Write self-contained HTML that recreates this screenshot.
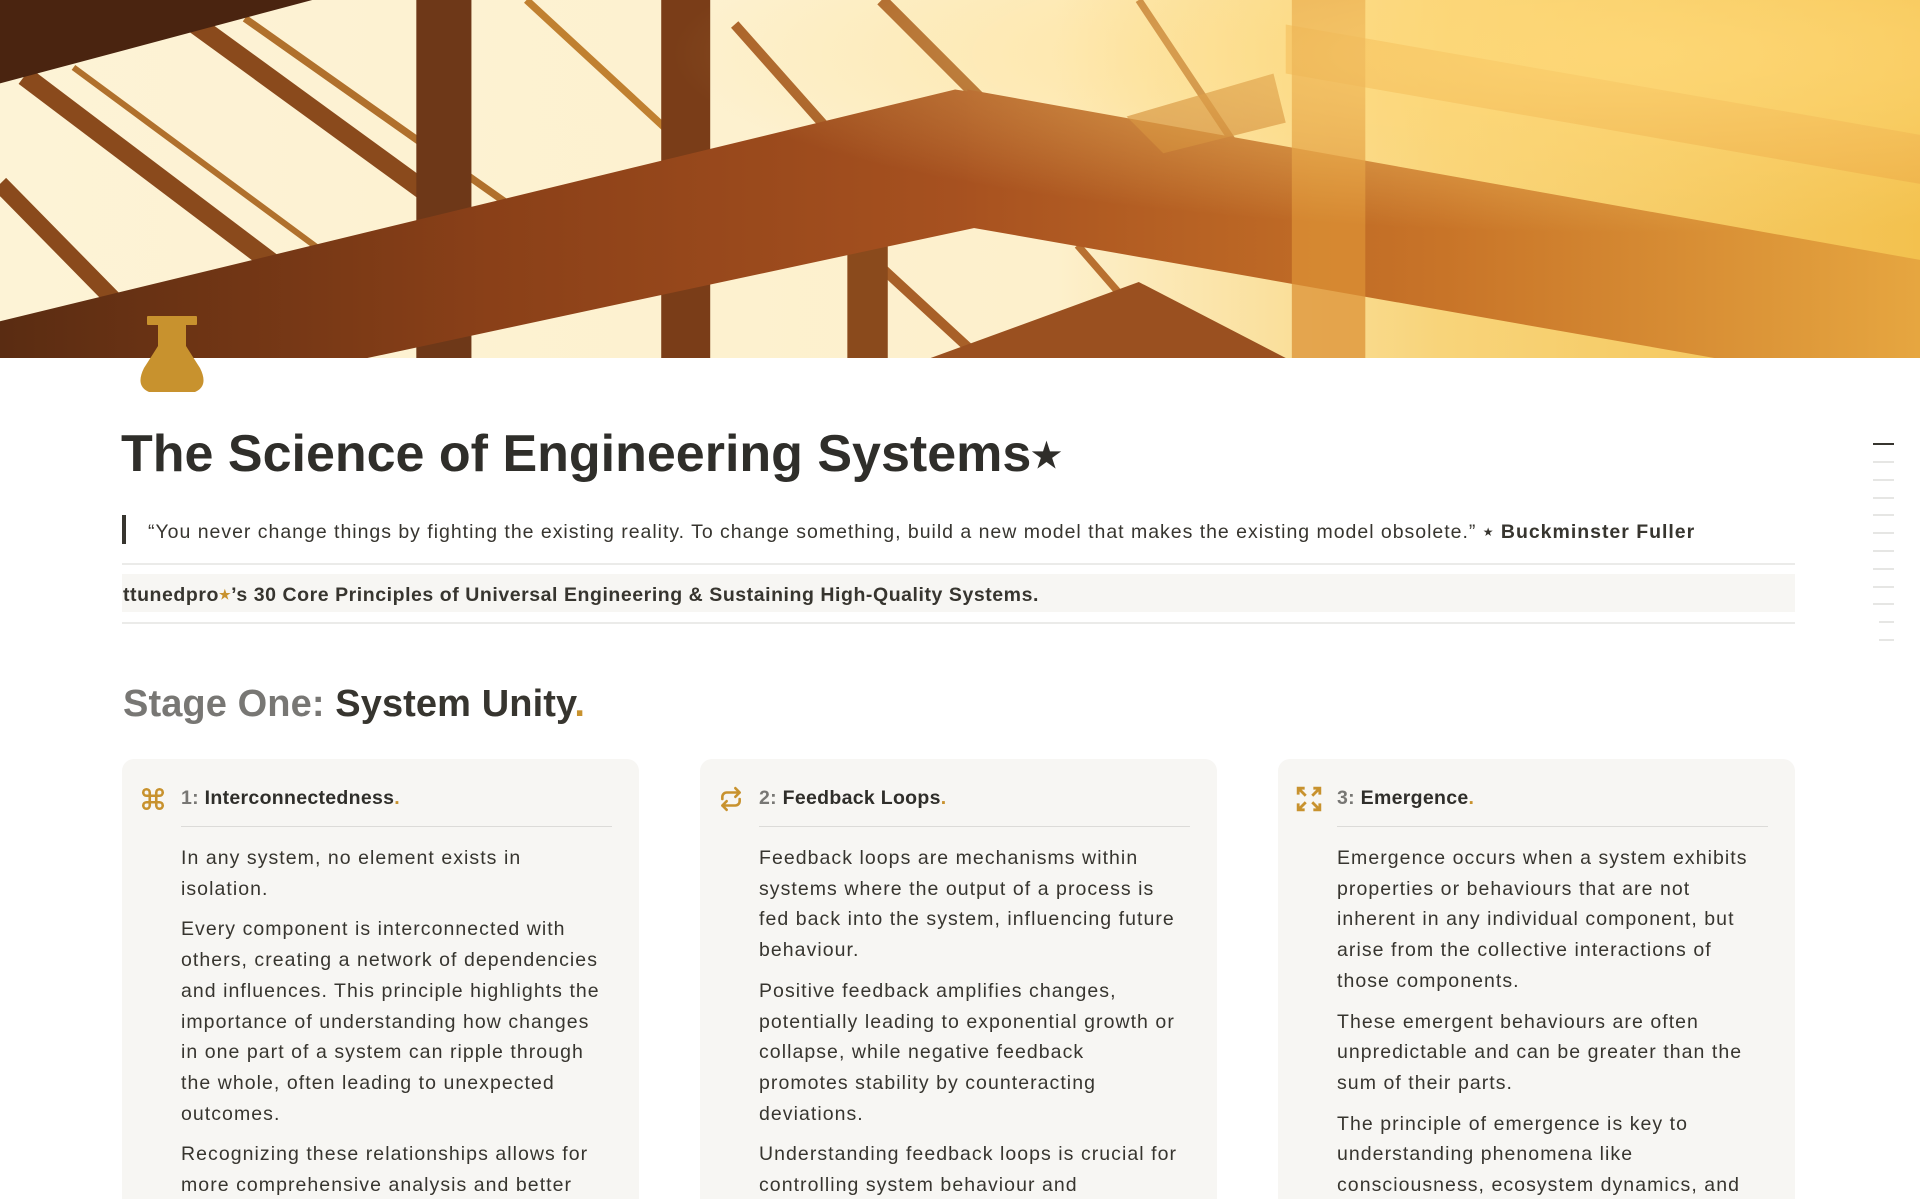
<!DOCTYPE html>
<html><head><meta charset="utf-8">
<style>
*{margin:0;padding:0;box-sizing:border-box}
html,body{width:1920px;height:1199px;overflow:hidden;background:#fff;font-family:"Liberation Sans",Arial,sans-serif;color:#37352f;position:relative}
.abs{position:absolute}
.banner{left:0;top:0;width:1920px;height:358px}
.title{left:121px;top:424px;font-size:52px;font-weight:700;color:#2f2e2a;letter-spacing:0px;white-space:nowrap}
.title .st{font-size:34px;vertical-align:4px}
.qbar{left:122px;top:515px;width:4px;height:29px;background:#37352f}
.quote{left:148px;top:521px;font-size:19.5px;white-space:nowrap;letter-spacing:0.98px}
.hr{left:122px;width:1673px;height:2px;background:#ebebe9}
.band{left:122px;top:574px;width:1673px;height:38px;background:#f7f6f3}
.bt{position:absolute;left:1px;top:10px;font-size:19.5px;font-weight:700;white-space:nowrap;letter-spacing:0.55px}
.h2{left:123px;top:683px;font-size:38px;font-weight:700;white-space:nowrap;letter-spacing:0.1px}
.card{top:759px;width:517px;height:440px;background:#f7f6f3;border-radius:12px 12px 0 0;overflow:hidden}
.ic{position:absolute;left:18px;top:27px;width:26px;height:26px}
.ct{position:absolute;left:59px;top:28px;font-size:19.5px;font-weight:700;white-space:nowrap;color:#2f2e2a;letter-spacing:0.3px}
.ct .n{color:#787774}
.gold{color:#c8922e}
.dv{position:absolute;left:59px;top:67px;width:431px;height:1px;background:#dcdbd8}
.body{position:absolute;left:59px;top:84px;font-size:19.5px;line-height:30.7px;white-space:nowrap;color:#37352f;letter-spacing:1.05px}
.body p{margin-bottom:10px}
.toc{left:1873px;height:2px;background:#e6e6e4;width:21px}
</style></head><body>

<svg class="abs banner" viewBox="0 0 1568 292" preserveAspectRatio="none">
<defs>
<linearGradient id="bg" x1="0" y1="0" x2="1" y2="0">
<stop offset="0" stop-color="#fdf3d6"/><stop offset="0.55" stop-color="#fdf0cc"/><stop offset="0.75" stop-color="#f8d47a"/><stop offset="1" stop-color="#f3c14e"/></linearGradient>
<linearGradient id="bm" x1="0" y1="0" x2="1" y2="0">
<stop offset="0" stop-color="#5a2c12"/><stop offset="0.5" stop-color="#8a4018"/><stop offset="1" stop-color="#a85220"/></linearGradient>
<linearGradient id="bm2" x1="0" y1="0" x2="1" y2="0">
<stop offset="0" stop-color="#a85220"/><stop offset="0.5" stop-color="#c87428"/><stop offset="1" stop-color="#e6a640"/></linearGradient>
<radialGradient id="glow" cx="0.85" cy="0.15" r="0.5"><stop offset="0" stop-color="#ffd978" stop-opacity="0.8"/><stop offset="1" stop-color="#ffd978" stop-opacity="0"/></radialGradient>
</defs>
<rect width="1568" height="292" fill="url(#bg)"/>
<g stroke="#8a4a1c" fill="none">
<line x1="160" y1="20" x2="380" y2="180" stroke-width="16"/>
<line x1="200" y1="15" x2="420" y2="170" stroke-width="6" stroke="#b0702c"/>
<line x1="20" y1="62" x2="240" y2="228" stroke-width="16"/>
<line x1="60" y1="55" x2="270" y2="210" stroke-width="5" stroke="#b0702c"/>
<line x1="0" y1="150" x2="120" y2="272" stroke-width="14"/>
<line x1="430" y1="0" x2="560" y2="120" stroke-width="6" stroke="#c08030"/>
<line x1="600" y1="20" x2="680" y2="110" stroke-width="8" stroke="#a86028"/>
<line x1="720" y1="0" x2="800" y2="80" stroke-width="10" stroke="#a86028"/>
<line x1="700" y1="200" x2="800" y2="292" stroke-width="8" stroke="#a86028"/>
<line x1="880" y1="200" x2="960" y2="292" stroke-width="6" stroke="#b87030"/>
<line x1="930" y1="0" x2="1010" y2="120" stroke-width="6" stroke="#b87030"/>
</g>
<polygon points="0,0 255,0 0,68" fill="#4a2410"/>
<rect x="340" y="0" width="45" height="292" fill="#6e3818"/>
<rect x="540" y="0" width="40" height="292" fill="#7a3d18"/>
<rect x="692" y="195" width="33" height="97" fill="#8a4a1c"/>
<polygon points="0,262 780,73 800,76 800,185 300,292 0,292" fill="url(#bm)"/>
<polygon points="790,73 1568,212 1568,292 1400,292 790,185" fill="url(#bm2)"/>
<polygon points="1050,20 1568,110 1568,150 1050,60" fill="#e9a440" opacity="0.6"/>
<polygon points="920,95 1040,60 1050,100 950,125" fill="#c87a2c" opacity="0.7"/>
<rect x="1055" y="0" width="60" height="292" fill="#dc9236" opacity="0.75"/>
<polygon points="760,292 930,230 1050,292" fill="#9a5020"/>
<rect width="1568" height="292" fill="url(#glow)"/>
</svg>

<svg class="abs" style="left:137px;top:316px" width="70" height="76" viewBox="0 0 70 76">
<rect x="10" y="0" width="50" height="9" rx="1" fill="#c8922e"/>
<path d="M21 9 H49 V30 Q54 38 63 52 Q72 70 58 76 H12 Q-2 70 7 52 Q16 38 21 30 Z" fill="#c8922e"/>
</svg>

<div class="abs title">The Science of Engineering Systems<span class="st">★</span></div>
<div class="abs qbar"></div>
<div class="abs quote">“You never change things by fighting the existing reality. To change something, build a new model that makes the existing model obsolete.” <span style="font-size:12px;vertical-align:2px">★</span> <b>Buckminster Fuller</b></div>
<div class="abs hr" style="top:563px"></div>
<div class="abs band"><div class="bt">ttunedpro<span class="gold" style="font-size:13px;vertical-align:2px">★</span>’s 30 Core Principles of Universal Engineering &amp; Sustaining High-Quality Systems.</div></div>
<div class="abs hr" style="top:622px"></div>
<div class="abs h2"><span style="color:#787774">Stage One:</span> System Unity<span class="gold">.</span></div>

<div class="abs card" style="left:122px">
<svg class="ic" viewBox="0 0 24 24" fill="none" stroke="#c8922e" stroke-width="2.4"><path d="M9 9H15V15H9Z M9 9V6A3 3 0 1 0 6 9H9 M15 9V6A3 3 0 1 1 18 9H15 M9 15V18A3 3 0 1 1 6 15H9 M15 15V18A3 3 0 1 0 18 15H15"/></svg>
<div class="ct"><span class="n">1:</span> Interconnectedness<span class="gold">.</span></div>
<div class="dv"></div>
<div class="body">
<p>In any system, no element exists in<br>isolation.</p>
<p>Every component is interconnected with<br>others, creating a network of dependencies<br>and influences. This principle highlights the<br>importance of understanding how changes<br>in one part of a system can ripple through<br>the whole, often leading to unexpected<br>outcomes.</p>
<p>Recognizing these relationships allows for<br>more comprehensive analysis and better</p>
</div>
</div>

<div class="abs card" style="left:700px">
<svg class="ic" viewBox="0 0 24 24" fill="none" stroke="#c8922e" stroke-width="2.4" stroke-linecap="round" stroke-linejoin="round"><path d="M16 2L20 6L16 10 M4 12V10A4 4 0 0 1 8 6H20 M8 22L4 18L8 14 M20 12V14A4 4 0 0 1 16 18H4"/></svg>
<div class="ct"><span class="n">2:</span> Feedback Loops<span class="gold">.</span></div>
<div class="dv"></div>
<div class="body">
<p>Feedback loops are mechanisms within<br>systems where the output of a process is<br>fed back into the system, influencing future<br>behaviour.</p>
<p>Positive feedback amplifies changes,<br>potentially leading to exponential growth or<br>collapse, while negative feedback<br>promotes stability by counteracting<br>deviations.</p>
<p>Understanding feedback loops is crucial for<br>controlling system behaviour and</p>
</div>
</div>

<div class="abs card" style="left:1278px">
<svg class="ic" viewBox="0 0 24 24" fill="none" stroke="#c8922e" stroke-width="2.6"><path d="M2 8V2H8 M2 2L9 9 M16 2H22V8 M22 2L15 9 M2 16V22H8 M2 22L9 15 M22 16V22H16 M22 22L15 15"/></svg>
<div class="ct"><span class="n">3:</span> Emergence<span class="gold">.</span></div>
<div class="dv"></div>
<div class="body">
<p>Emergence occurs when a system exhibits<br>properties or behaviours that are not<br>inherent in any individual component, but<br>arise from the collective interactions of<br>those components.</p>
<p>These emergent behaviours are often<br>unpredictable and can be greater than the<br>sum of their parts.</p>
<p>The principle of emergence is key to<br>understanding phenomena like<br>consciousness, ecosystem dynamics, and</p>
</div>
</div>

<div class="abs toc" style="top:443px;background:#37352f"></div>
<div class="abs toc" style="top:461px"></div>
<div class="abs toc" style="top:479px"></div>
<div class="abs toc" style="top:497px"></div>
<div class="abs toc" style="top:514px"></div>
<div class="abs toc" style="top:532px"></div>
<div class="abs toc" style="top:550px"></div>
<div class="abs toc" style="top:568px"></div>
<div class="abs toc" style="top:586px"></div>
<div class="abs toc" style="top:603px"></div>
<div class="abs toc" style="top:621px;left:1879px;width:15px"></div>
<div class="abs toc" style="top:639px;left:1879px;width:15px"></div>
</body></html>
